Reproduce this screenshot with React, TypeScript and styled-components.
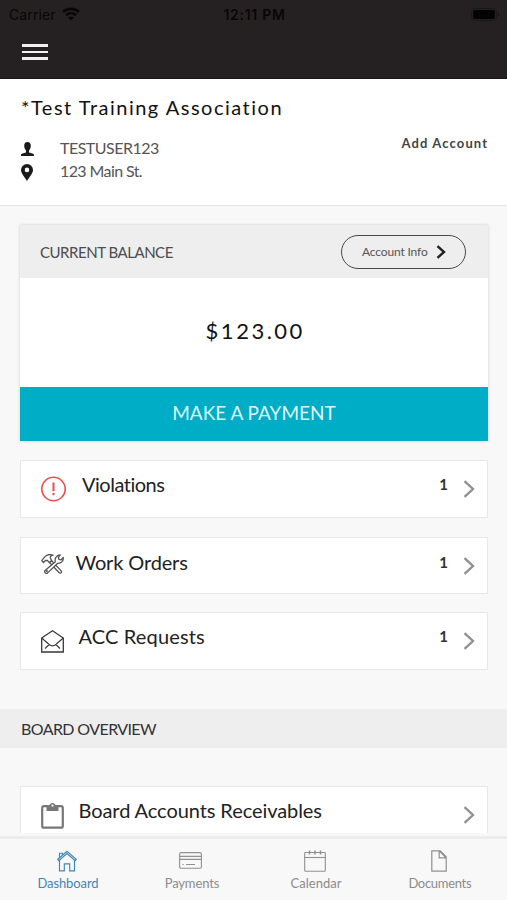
import React from "react";
import styled, { createGlobalStyle } from "styled-components";

const Global = createGlobalStyle`
  * { box-sizing: border-box; }
  body { margin: 0; background: #f8f8f8; font-family: Lato, "Open Sans", sans-serif; font-variant-ligatures: none; }
`;

const Screen = styled.div`
  width: 507px;
  height: 900px;
  overflow: hidden;
  display: flex;
  flex-direction: column;
  background: #f8f8f8;
`;

const Label = styled.span<{ $size: number; $track?: number; $weight?: number; $color?: string }>`
  display: inline-block;
  white-space: nowrap;
  line-height: 24px;
  font-size: ${(p) => p.$size}px;
  letter-spacing: ${(p) => p.$track ?? 0}px;
  margin-right: ${(p) => -(p.$track ?? 0)}px;
  font-weight: ${(p) => p.$weight ?? 400};
  color: ${(p) => p.$color ?? "#222"};
`;

const TopBar = styled.header`
  flex: none;
  height: 79px;
  background: #252122;
  border-bottom: 1px solid #171415;
`;

const StatusBar = styled.div`
  height: 28px;
  padding: 0 7px 0 9px;
  display: grid;
  grid-template-columns: 1fr auto 1fr;
  align-items: center;
  font-family: Inter, "Liberation Sans", sans-serif;
  color: #080607;
`;

const Carrier = styled.div`
  display: flex;
  align-items: center;
  gap: 6px;
  font-size: 14px;
  letter-spacing: 0.1px;
`;

const Clock = styled.div`
  font-size: 14px;
  font-weight: 600;
  letter-spacing: 0.7px;
`;

const BatterySlot = styled.div`
  display: flex;
  justify-content: flex-end;
`;

const MenuButton = styled.button`
  display: flex;
  flex-direction: column;
  gap: 4px;
  margin: 16px 0 0 22px;
  padding: 0;
  border: 0;
  background: none;
`;

const MenuLine = styled.span`
  width: 26px;
  height: 2.5px;
  background: #f1eff0;
`;

const Account = styled.section`
  flex: none;
  height: 127px;
  padding: 16px 20px 0 21px;
  display: flex;
  justify-content: space-between;
  background: #fff;
  border-bottom: 1px solid #e6e6e6;
`;

const AccountDetails = styled.div`
  display: flex;
  flex-direction: column;
`;

const DetailRow = styled.div<{ $first?: boolean }>`
  display: flex;
  align-items: center;
  height: 24px;
  margin-top: ${(p) => (p.$first ? 17 : -1)}px;
`;

const DetailIcon = styled.div`
  width: 39px;
  display: flex;
  padding-top: 2px;
`;

const AddAccount = styled.div`
  padding-top: 36px;
`;

const BalanceCard = styled.section`
  flex: none;
  margin: 19px 19px 0 20px;
  height: 216px;
  display: flex;
  flex-direction: column;
  background: #fff;
  box-shadow: 0 0 3px rgba(0, 0, 0, 0.18);
`;

const BalanceHead = styled.div`
  height: 53px;
  padding: 0 22px 0 20px;
  display: flex;
  align-items: center;
  justify-content: space-between;
  background: #eee;
`;

const InfoButton = styled.button`
  width: 125px;
  height: 34px;
  padding: 0 19px 0 20px;
  display: flex;
  align-items: center;
  justify-content: space-between;
  border: 1.5px solid #484848;
  border-radius: 17px;
  background: none;
  font-family: inherit;
`;

const Amount = styled.div`
  height: 109px;
  display: flex;
  align-items: center;
  justify-content: center;
  padding-bottom: 4px;
`;

const PayButton = styled.button`
  height: 54px;
  padding: 0 0 3px;
  border: 0;
  background: #00adc6;
  font-family: inherit;
`;

const LinkRow = styled.div<{ $top: number; $height: number }>`
  flex: none;
  margin: ${(p) => p.$top}px 19px 0 20px;
  height: ${(p) => p.$height}px;
  padding: 0 12px 0 20px;
  display: flex;
  align-items: center;
  background: #fff;
  border: 1px solid #e8e8e8;
`;

const RowIcon = styled.div<{ $width: number; $lift?: number }>`
  width: ${(p) => p.$width}px;
  padding-bottom: ${(p) => p.$lift ?? 0}px;
  display: flex;
`;

const RowText = styled.div<{ $lift: number }>`
  flex: 1;
  display: flex;
  justify-content: space-between;
  padding-bottom: ${(p) => p.$lift}px;
`;

const Chevron = styled.div`
  display: flex;
  margin-left: 15px;
`;

const SectionHead = styled.h2`
  flex: none;
  margin: 39px 0 0;
  height: 39px;
  padding: 0 21px;
  display: flex;
  align-items: center;
  background: #eee;
`;

const Clip = styled.div`
  flex: none;
  height: 85px;
  margin-bottom: 3px;
  overflow: hidden;
`;

const TabBar = styled.nav`
  flex: none;
  height: 64px;
  padding: 11px 5px 0 6px;
  display: grid;
  grid-template-columns: repeat(4, 1fr);
  background: #f8f8f8;
  border-top: 3px solid #ececec;
`;

const Tab = styled.a`
  display: flex;
  flex-direction: column;
  align-items: center;
`;

const TabGlyph = styled.div`
  height: 21px;
  padding-right: 3px;
  display: flex;
  align-items: center;
`;

const WifiIcon = () => (
  <svg width="18" height="14" viewBox="0 0 18 14" fill="none" stroke="#080607" strokeWidth="2.6">
    <path d="M1 5C5.5 .8 12.500 .8 17 5" />
    <path d="M4 8.300C7 5.500 11 5.500 14 8.300" />
    <path d="M9 13.500 6 10.500C7.700 9 10.300 9 12 10.500Z" fill="#080607" stroke="none" />
  </svg>
);

const BatteryIcon = () => (
  <svg width="29" height="13" viewBox="0 0 29 13">
    <rect x=".5" y=".5" width="25" height="12" rx="3.500" fill="none" stroke="#1a1718" />
    <rect x="2" y="2" width="22" height="9" rx="2" fill="#040303" />
    <path d="M27 4.500c1.500.6 1.500 3.400 0 4Z" fill="#171415" />
  </svg>
);

const PersonIcon = () => (
  <svg width="13" height="14" viewBox="0 0 13 14" fill="#1b1b1b">
    <path d="M6.500 0C4.200 0 3.200 1.500 3.200 3.700c0 2 .8 3.700 1.800 4.800v1.800C4.700 11.200.3 11 0 12.800V14h13v-1.200C12.700 11 8.300 11.200 8 10.300V8.500c1-1.100 1.800-2.800 1.800-4.800C9.800 1.500 8.800 0 6.500 0Z" />
  </svg>
);

const PinIcon = () => (
  <svg width="12" height="17" viewBox="0 0 12 17" fill="#1b1b1b">
    <path fillRule="evenodd" d="M6 0a6 6 0 0 0-6 6c0 3.500 3.500 6.500 6 11 2.500-4.500 6-7.500 6-11a6 6 0 0 0-6-6Zm0 3.600a2.300 2.300 0 1 1 0 4.600 2.300 2.300 0 0 1 0-4.600Z" />
  </svg>
);

const ArrowIcon = ({ w, h, color, weight }: { w: number; h: number; color: string; weight: number }) => (
  <svg width={w} height={h} viewBox={`0 0 ${w} ${h}`} fill="none" stroke={color} strokeWidth={weight}>
    <path d={`M1.500 1.200 ${w - 2} ${h / 2} 1.500 ${h - 1.2}`} />
  </svg>
);

const AlertIcon = () => (
  <svg width="26" height="26" viewBox="0 0 26 26" fill="none" stroke="#ee4b4e">
    <circle cx="12.500" cy="13" r="11.700" strokeWidth="1.600" />
    <path d="M12.500 6.500v8.700M12.500 17v2.300" strokeWidth="2" />
  </svg>
);

const ToolsIcon = () => (
  <svg width="23" height="20" viewBox="0 0 23 20" fill="#fff" stroke="#555" strokeWidth="1.300" strokeLinejoin="round">
    <path d="M8.500 8.500 18.200 18.800c1.200.9 2.900-.6 2-1.900L10.600 6.800Z" />
    <path d="M.7 6.600 4 2.600C6.200.4 9.500.3 12 1.200 10 1.600 9 2.700 9.300 4l1.400 2.600-2.300 2L6.200 6.300l-1.700.2-2 2Z" />
    <path d="M14.300 7.800c-.9-3.500 1.600-7 5-7l-2 2.700.6 1.900 2.200.5 2.100-2.500c.7 3.300-2 6.100-5.400 5.900L6.600 18.900c-1.500 1.300-3.800-.8-2.500-2.500Z" />
    <circle cx="5.900" cy="17.100" r=".4" />
  </svg>
);

const EnvelopeIcon = () => (
  <svg width="23" height="23" viewBox="0 0 23 23" fill="none" stroke="#373737" strokeWidth="1.100">
    <path d="M.7 8 11.500.8 22.300 8v14H.7Z" strokeWidth="1.300" />
    <path d="m.7 8 7.500 6.500c2.200 1.800 4.400 1.800 6.600 0L22.300 8M8.200 14.500 4 18.500M14.800 14.500l4.200 4" />
  </svg>
);

const ClipboardIcon = () => (
  <svg width="23" height="27" viewBox="0 0 23 27" fill="none" stroke="#777">
    <rect x="1.200" y="4.200" width="20.600" height="21.500" rx="1.800" strokeWidth="2.200" />
    <path d="M5.500 9V4.500H8C8.500-.2 14.500-.2 15 4.500h2.500V9Z" fill="#777" stroke="none" />
    <circle cx="11.500" cy="3.600" r="1.100" fill="#fff" stroke="none" />
  </svg>
);

const HomeIcon = () => (
  <svg width="20" height="22" viewBox="0 0 20 22" fill="none" stroke="#3f86b5" strokeWidth="1.150">
    <path d="M.8 9.300 10 1.200l9.200 8.100-1 1.300L10 3.500l-8.200 7.100Z" />
    <path d="M2.500 10v10.800h4.800v-7h5.400v7h4.800V10M2.500 7.500V3.200h3v1.700" />
  </svg>
);

const CardIcon = () => (
  <svg width="23" height="17" viewBox="0 0 23 17" fill="none" stroke="#909090" strokeWidth="1.100">
    <rect x=".6" y=".6" width="21.800" height="15.600" rx="1.500" />
    <path d="M.6 4.400h21.800M.6 7.400h21.800M3.500 12.500h1.200M7 12.500h9" />
  </svg>
);

const CalendarIcon = () => (
  <svg width="22" height="22" viewBox="0 0 22 22" fill="none" stroke="#909090" strokeWidth="1.100">
    <rect x=".7" y="2.500" width="20.600" height="18.700" rx=".8" />
    <path d="M.7 7.500h20.600" />
    <path d="M5.500.5v4M11 .5v4M16.500.5v4" strokeWidth="1.500" />
  </svg>
);

const DocumentIcon = () => (
  <svg width="16" height="22" viewBox="0 0 16 22" fill="none" stroke="#909090" strokeWidth="1.200">
    <path d="M.8.8h8.500l5.900 6v14.400H.8ZM8.200.8v7h7M8.200.8l6.600 6.700" />
  </svg>
);

const links = [
  { name: "Violations", icon: <AlertIcon />, slot: 41, iconLift: 0, top: 19, height: 58, lift: 10, track: -0.5 },
  { name: "Work Orders", icon: <ToolsIcon />, slot: 34.5, iconLift: 3, top: 19, height: 57, lift: 7, track: -0.15 },
  { name: "ACC Requests", icon: <EnvelopeIcon />, slot: 37.5, iconLift: 0, top: 18, height: 58, lift: 11, track: 0.15 },
];

const tabs = [
  { name: "Dashboard", icon: <HomeIcon />, color: "#3f86b5", track: -0.1 },
  { name: "Payments", icon: <CardIcon />, color: "#8c8c8c", track: -0.15 },
  { name: "Calendar", icon: <CalendarIcon />, color: "#8c8c8c", track: 0.05 },
  { name: "Documents", icon: <DocumentIcon />, color: "#8c8c8c", track: -0.3 },
];

export default function App() {
  return (
    <Screen>
      <Global />
      <TopBar>
        <StatusBar>
          <Carrier>Carrier <WifiIcon /></Carrier>
          <Clock>12:11 PM</Clock>
          <BatterySlot><BatteryIcon /></BatterySlot>
        </StatusBar>
        <MenuButton aria-label="Menu"><MenuLine /><MenuLine /><MenuLine /></MenuButton>
      </TopBar>
      <Account>
        <AccountDetails>
          <Label $size={20} $track={1.5} $color="#111">*Test Training Association</Label>
          <DetailRow $first>
            <DetailIcon><PersonIcon /></DetailIcon>
            <Label $size={16} $track={-0.5} $color="#555">TESTUSER123</Label>
          </DetailRow>
          <DetailRow>
            <DetailIcon><PinIcon /></DetailIcon>
            <Label $size={16} $track={-0.6} $color="#555">123 Main St.</Label>
          </DetailRow>
        </AccountDetails>
        <AddAccount><Label $size={13} $track={1.1} $weight={700} $color="#444">Add Account</Label></AddAccount>
      </Account>
      <BalanceCard>
        <BalanceHead>
          <Label $size={15} $track={-0.47} $color="#4c4c4c">CURRENT BALANCE</Label>
          <InfoButton>
            <Label $size={12} $track={-0.15} $color="#555">Account Info</Label>
            <ArrowIcon w={10} h={14} color="#222" weight={2.4} />
          </InfoButton>
        </BalanceHead>
        <Amount><Label $size={22} $track={2.5} $color="#111">$123.00</Label></Amount>
        <PayButton><Label $size={19} $color="#dff7fa">MAKE A PAYMENT</Label></PayButton>
      </BalanceCard>
      {links.map((l) => (
        <LinkRow key={l.name} $top={l.top} $height={l.height}>
          <RowIcon $width={l.slot} $lift={l.iconLift}>{l.icon}</RowIcon>
          <RowText $lift={l.lift}>
            <Label $size={20} $track={l.track}>{l.name}</Label>
            <Label $size={15} $weight={700} $color="#333">1</Label>
          </RowText>
          <Chevron><ArrowIcon w={12} h={18} color="#8f8f8f" weight={2.3} /></Chevron>
        </LinkRow>
      ))}
      <SectionHead><Label $size={16} $track={-0.6} $color="#333">BOARD OVERVIEW</Label></SectionHead>
      <Clip>
        <LinkRow $top={38} $height={58}>
          <RowIcon $width={37.5}><ClipboardIcon /></RowIcon>
          <RowText $lift={11}><Label $size={20} $track={-0.08}>Board Accounts Receivables</Label></RowText>
          <Chevron><ArrowIcon w={12} h={18} color="#8f8f8f" weight={2.3} /></Chevron>
        </LinkRow>
      </Clip>
      <TabBar>
        {tabs.map((t) => (
          <Tab key={t.name}>
            <TabGlyph>{t.icon}</TabGlyph>
            <Label $size={13} $color={t.color} $track={t.track}>{t.name}</Label>
          </Tab>
        ))}
      </TabBar>
    </Screen>
  );
}
